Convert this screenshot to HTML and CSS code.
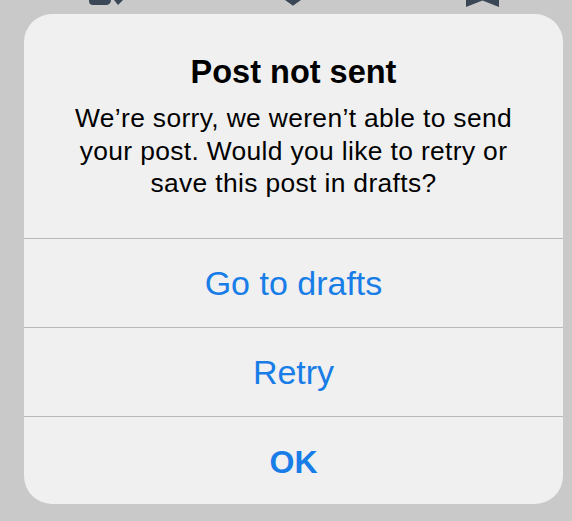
FILE: index.html
```html
<!DOCTYPE html>
<html>
<head>
<meta charset="utf-8">
<link rel="stylesheet" href="styles.css">
</head>
<body>
<div class="tabbar">
  <svg class="icon icon-left" width="34" height="6" viewBox="0 0 34 6">
    <path d="M0 0 H22 Q22 4 18 5 H4 Q0 5 0 1 Z" fill="#3a4756"/>
    <path d="M25 0 H34 L29 5 Z" fill="#3a4756"/>
  </svg>
  <svg class="icon icon-mid" width="16" height="6" viewBox="0 0 16 6">
    <path d="M0 0 H16 L9 5 Q8 6 7 5 Z" fill="#3a4756"/>
  </svg>
  <svg class="icon icon-right" width="33" height="7" viewBox="0 0 33 7">
    <path d="M0 0 H33 V7 L16.5 0.5 L0 7 Z" fill="#3a4756"/>
  </svg>
</div>
<div class="alert">
  <div class="alert-body">
    <h1 class="alert-title">Post not sent</h1>
    <p class="alert-message">We’re sorry, we weren’t able to send your post. Would you like to retry or save this post in drafts?</p>
  </div>
  <div class="alert-action">Go to drafts</div>
  <div class="alert-action">Retry</div>
  <div class="alert-action alert-action-last">OK</div>
</div>
</body>
</html>
```
FILE: styles.css
```css
html, body {
  margin: 0;
  padding: 0;
}
body {
  background: #c9c9c9;
  width: 572px;
  height: 521px;
  overflow: hidden;
  font-family: "Liberation Sans", Arial, sans-serif;
}
.tabbar {
  height: 14px;
  display: flex;
  align-items: flex-start;
}
.icon {
  display: block;
}
.icon-left {
  margin-left: 89px;
}
.icon-mid {
  margin-left: 162px;
}
.icon-right {
  margin-left: 165px;
}
.alert {
  margin-left: 24px;
  width: 539px;
  height: 490px;
  background: #f0f0f0;
  border-radius: 28px;
  display: flex;
  flex-direction: column;
  overflow: hidden;
}
.alert-body {
  height: 224px;
  flex: none;
  box-sizing: border-box;
  padding: 38px 40px 0;
  text-align: center;
}
.alert-title {
  margin: 0;
  font-size: 32.5px;
  line-height: 40px;
  font-weight: bold;
  color: #000;
}
.alert-message {
  margin: 10px 0 0;
  font-size: 26.4px;
  line-height: 32.5px;
  letter-spacing: 0.35px;
  color: #000;
}
.alert-action {
  height: 89px;
  flex: none;
  box-sizing: border-box;
  border-top: 1px solid #b9b9b9;
  display: flex;
  align-items: center;
  justify-content: center;
  padding-top: 1px;
  font-size: 34px;
  color: #187de7;
}
.alert-action-last {
  flex: 1;
  height: auto;
  font-weight: bold;
  font-size: 32px;
  padding-top: 3px;
}
```
